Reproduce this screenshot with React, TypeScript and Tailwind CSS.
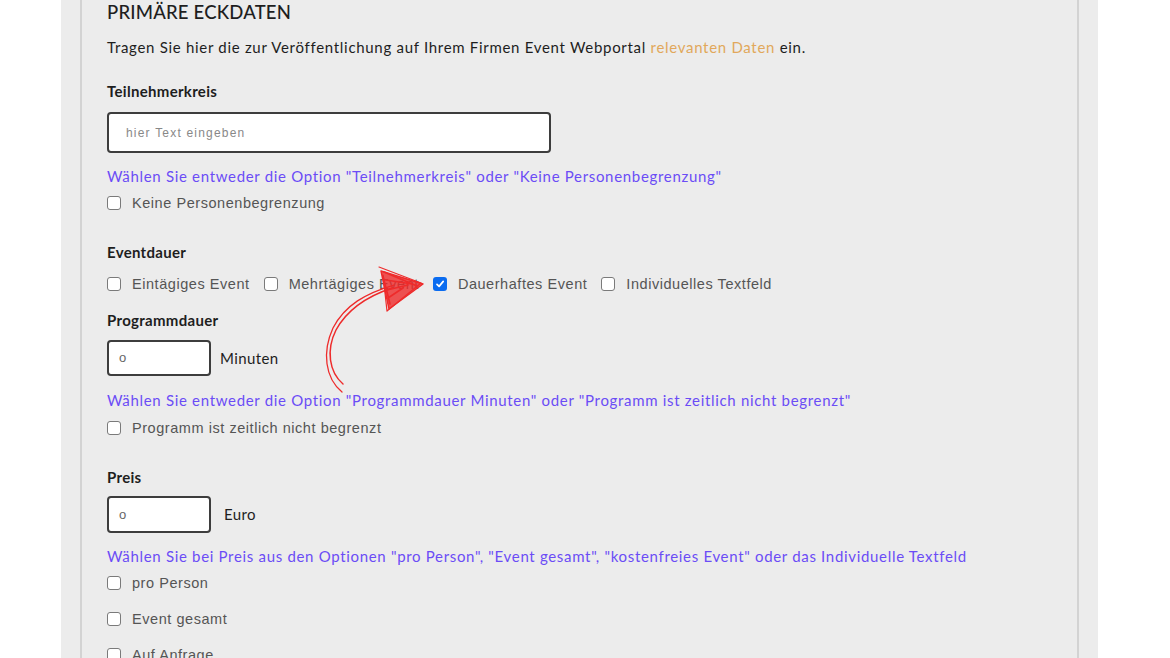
const raleway = "font-['Lato','Noto_Sans',sans-serif]";
const arial = "font-['Liberation_Sans','Arial',sans-serif]";

const Box = ({ checked = false }: { checked?: boolean }) =>
  checked ? (
    <span className="w-[14px] h-[14px] rounded-[3px] bg-[#0b6cf0] flex items-center justify-center shrink-0">
      <svg width="10" height="10" viewBox="0 0 10 10" fill="none">
        <path d="M2 5.3 L4.1 7.4 L8.2 2.4" stroke="white" strokeWidth="1.7" strokeLinecap="round" strokeLinejoin="round" />
      </svg>
    </span>
  ) : (
    <span className="w-[14px] h-[14px] rounded-[3px] bg-white border border-[#7a7a7a] shrink-0" />
  );

const Check = ({ label, checked = false }: { label: string; checked?: boolean }) => (
  <label className="flex items-center">
    <Box checked={checked} />
    <span className={`${arial} ml-[11px] text-[14.5px] leading-[20px] text-[#555] tracking-[0.55px]`}>{label}</span>
  </label>
);

const Hint = ({ children }: { children: React.ReactNode }) => (
  <p className={`${raleway} text-[15px] text-[#6b4cf6] tracking-[0.68px] leading-[20px]`}>{children}</p>
);

const Label = ({ children }: { children: React.ReactNode }) => (
  <h3 className={`${raleway} text-[15px] font-bold text-[#1e1e1e] leading-[20px] tracking-[0.3px]`}>{children}</h3>
);

const Arrow = () => (
  <svg
    className="absolute left-0 top-0 pointer-events-none"
    width="1170"
    height="658"
    viewBox="0 0 1170 658"
    fill="none"
  >
    <g stroke="#ee2b2b" strokeLinecap="round" strokeLinejoin="round">
      <path d="M343 384 C329 372 326 350 336 330 C348 308 368 296 392 288" strokeWidth="1.5" />
      <path d="M342 392 C325 378 322 352 333 328 C345 305 366 293 394 285" strokeWidth="1.3" />
      <path d="M381 271 L423 284 L389 309 Z" fill="#ee2b2b" fillOpacity="0.8" strokeWidth="1.4" />
      <path d="M379 267 L421 283 L387 311 L383 275" strokeWidth="1.2" />
      <path d="M384 272 L417 286 M386 280 L412 284 M387 290 L408 285 M388 298 L403 288 M383 276 L390 304" strokeWidth="1.6" />
    </g>
  </svg>
);

export default function App() {
  return (
    <div className="relative w-[1170px] h-[658px] overflow-hidden bg-white">
      <div className="ml-[61px] w-[1037px] h-full bg-[#ececec] px-[19px]">
        <div className="h-full border-l-2 border-r-2 border-[#d3d3d3] pl-[25px]">
          <h2 className={`${raleway} text-[18.5px] font-medium text-[#1e1e1e] leading-[24px] tracking-[0.2px]`}>
            PRIMÄRE ECKDATEN
          </h2>
          <p className={`${raleway} mt-[13px] text-[15px] text-[#1e1e1e] leading-[20px] tracking-[0.7px]`}>
            Tragen Sie hier die zur Veröffentlichung auf Ihrem Firmen Event Webportal{" "}
            <span className="text-[#e1a85b]">relevanten Daten</span> ein.
          </p>

          <div className="mt-[24px]">
            <Label>Teilnehmerkreis</Label>
          </div>
          <div className="mt-[11px] w-[444px] h-[41px] bg-white border-2 border-[#3d3d3d] rounded-[4px] flex items-center pl-[17px]">
            <span className={`${arial} text-[12px] text-[#888] tracking-[1.2px]`}>hier Text eingeben</span>
          </div>
          <div className="mt-[13px]">
            <Hint>Wählen Sie entweder die Option "Teilnehmerkreis" oder "Keine Personenbegrenzung"</Hint>
          </div>
          <div className="mt-[7px]">
            <Check label="Keine Personenbegrenzung" />
          </div>

          <div className="mt-[29px]">
            <Label>Eventdauer</Label>
          </div>
          <div className="mt-[12px] flex items-center gap-[14px]">
            <Check label="Eintägiges Event" />
            <Check label="Mehrtägiges Event" />
            <Check label="Dauerhaftes Event" checked />
            <Check label="Individuelles Textfeld" />
          </div>

          <div className="mt-[16px]">
            <Label>Programmdauer</Label>
          </div>
          <div className="mt-[10px] flex items-center">
            <div className="w-[104px] h-[36px] bg-white border-2 border-[#3d3d3d] rounded-[4px] flex items-center pl-[10px]">
              <span className={`${arial} text-[13px] text-[#666]`}>o</span>
            </div>
            <span className={`${raleway} ml-[9px] text-[15px] text-[#1e1e1e] tracking-[0.4px]`}>Minuten</span>
          </div>
          <div className="mt-[14px]">
            <Hint>Wählen Sie entweder die Option "Programmdauer Minuten" oder "Programm ist zeitlich nicht begrenzt"</Hint>
          </div>
          <div className="mt-[8px]">
            <Check label="Programm ist zeitlich nicht begrenzt" />
          </div>

          <div className="mt-[29px]">
            <Label>Preis</Label>
          </div>
          <div className="mt-[9px] flex items-center">
            <div className="w-[104px] h-[37px] bg-white border-2 border-[#3d3d3d] rounded-[4px] flex items-center pl-[10px]">
              <span className={`${arial} text-[13px] text-[#666]`}>o</span>
            </div>
            <span className={`${raleway} ml-[13px] text-[15px] text-[#1e1e1e] tracking-[0.4px]`}>Euro</span>
          </div>
          <div className="mt-[13px]">
            <Hint>
              Wählen Sie bei Preis aus den Optionen "pro Person", "Event gesamt", "kostenfreies Event" oder das Individuelle Textfeld
            </Hint>
          </div>
          <div className="mt-[7px] flex flex-col gap-[16px]">
            <Check label="pro Person" />
            <Check label="Event gesamt" />
            <Check label="Auf Anfrage" />
          </div>
        </div>
      </div>
      <Arrow />
    </div>
  );
}
